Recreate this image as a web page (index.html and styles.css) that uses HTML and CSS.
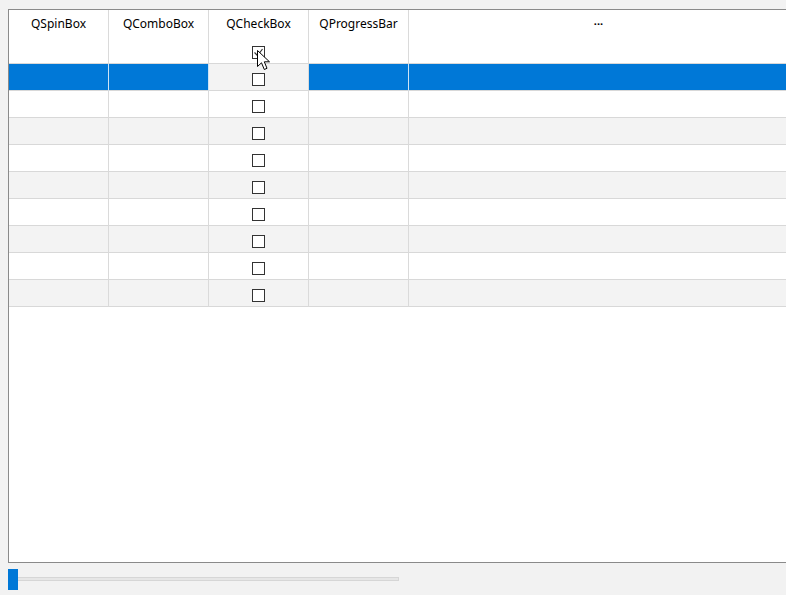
FILE: index.html
```html
<!DOCTYPE html>
<html>
<head>
<meta charset="utf-8">
<link rel="stylesheet" href="styles.css">
</head>
<body>
<div class="frame">
  <div class="grid">
    <div class="hcell">QSpinBox</div>
    <div class="hcell">QComboBox</div>
    <div class="hcell hcheck">QCheckBox
      <span class="cb checked">
        <svg class="tick" width="11" height="11" viewBox="0 0 11 11"><path d="M1.5 5.5 L4.5 8.5 L9.5 2" fill="none" stroke="#333" stroke-width="1.2"/></svg>
        <svg class="cursor" width="14" height="22" viewBox="0 0 14 22"><path d="M0.5 0.5 L0.5 16.5 L4.5 12.8 L7.3 19.5 L10 18.3 L7.3 11.8 L12.5 11.8 Z" fill="#fff" stroke="#000" stroke-width="1" stroke-linejoin="miter"/></svg>
      </span>
    </div>
    <div class="hcell">QProgressBar</div>
    <div class="hcell last"><span class="dots">···</span></div>

    <div class="cell sel"></div><div class="cell sel"></div><div class="cell alt ccell"><span class="cb"></span></div><div class="cell sel"></div><div class="cell sel last"></div>
    <div class="cell"></div><div class="cell"></div><div class="cell ccell"><span class="cb"></span></div><div class="cell"></div><div class="cell last"></div>
    <div class="cell alt"></div><div class="cell alt"></div><div class="cell alt ccell"><span class="cb"></span></div><div class="cell alt"></div><div class="cell alt last"></div>
    <div class="cell"></div><div class="cell"></div><div class="cell ccell"><span class="cb"></span></div><div class="cell"></div><div class="cell last"></div>
    <div class="cell alt"></div><div class="cell alt"></div><div class="cell alt ccell"><span class="cb"></span></div><div class="cell alt"></div><div class="cell alt last"></div>
    <div class="cell"></div><div class="cell"></div><div class="cell ccell"><span class="cb"></span></div><div class="cell"></div><div class="cell last"></div>
    <div class="cell alt"></div><div class="cell alt"></div><div class="cell alt ccell"><span class="cb"></span></div><div class="cell alt"></div><div class="cell alt last"></div>
    <div class="cell"></div><div class="cell"></div><div class="cell ccell"><span class="cb"></span></div><div class="cell"></div><div class="cell last"></div>
    <div class="cell alt"></div><div class="cell alt"></div><div class="cell alt ccell"><span class="cb"></span></div><div class="cell alt"></div><div class="cell alt last"></div>
  </div>
</div>
<div class="slider">
  <div class="groove"></div>
  <div class="handle"></div>
</div>
</body>
</html>
```

FILE: styles.css
```css
html, body {
  margin: 0;
  padding: 0;
}
body {
  width: 786px;
  height: 595px;
  overflow: hidden;
  background: #f2f2f2;
  font-family: "Noto Sans", "Open Sans", sans-serif;
  font-size: 12px;
  color: #000;
}
.frame {
  margin: 9px 0 0 8px;
  width: 800px;
  height: 552px;
  border: 1px solid #8a8a8a;
  border-right: none;
  background: #fff;
  overflow: hidden;
}
.grid {
  display: grid;
  grid-template-columns: 100px 100px 100px 100px 1fr;
  grid-template-rows: 54px repeat(9, 27px);
}
.hcell {
  box-sizing: border-box;
  border-right: 1px solid #dadada;
  border-bottom: 1px solid #d8d8d8;
  background: #fff;
  text-align: center;
  line-height: 16px;
  padding-top: 6px;
  position: relative;
}
.hcell.last {
  padding-right: 20px;
}
.dots {
  font-weight: bold;
  font-size: 11px;
}
.hcheck .cb {
  position: absolute;
  left: 43px;
  top: 36px;
}
.cell {
  box-sizing: border-box;
  border-right: 1px solid #dadada;
  border-bottom: 1px solid #d8d8d8;
  background: #fff;
}
.cell.alt {
  background: #f3f3f3;
}
.cell.sel {
  background: #0078d7;
  border-right-color: #cde3f5;
  border-bottom-color: #d8d8d8;
}
.ccell {
  display: flex;
  justify-content: center;
  align-items: flex-start;
  padding-top: 9px;
}
.cb {
  display: block;
  box-sizing: border-box;
  width: 13px;
  height: 13px;
  border: 1px solid #333;
  background: #fff;
  position: relative;
}
.tick {
  position: absolute;
  left: 0;
  top: 0;
}
.cursor {
  position: absolute;
  left: 4px;
  top: 3px;
}
.slider {
  position: relative;
  height: 34px;
  margin-left: 8px;
}
.groove {
  position: absolute;
  left: 0;
  top: 14px;
  width: 391px;
  height: 4px;
  box-sizing: border-box;
  background: #e6e6e6;
  border: 1px solid #d6d6d6;
}
.handle {
  position: absolute;
  left: 0;
  top: 6px;
  width: 10px;
  height: 21px;
  background: #0078d7;
}
```
